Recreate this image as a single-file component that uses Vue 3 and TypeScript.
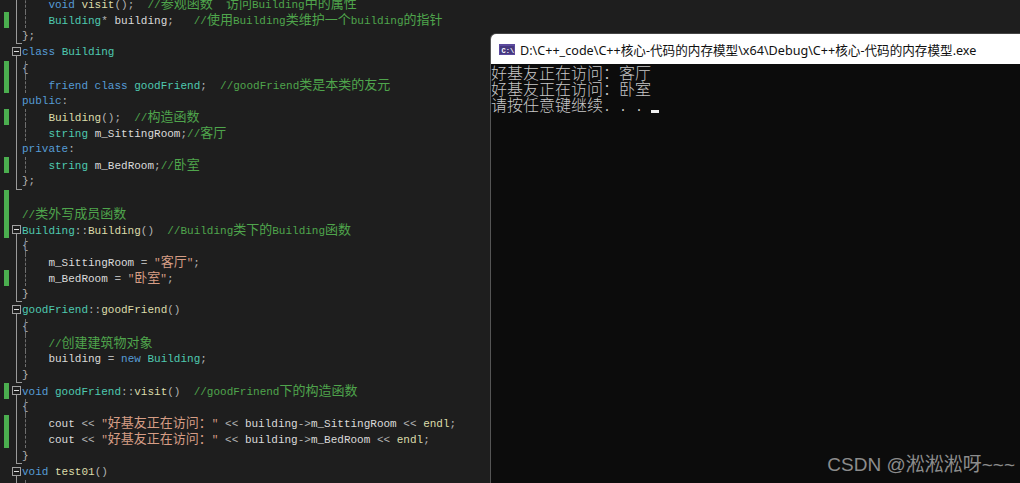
<script setup lang="ts">
type Seg = [string, string];
interface Line { segs: Seg[]; bar?: boolean; fold?: 'open' | 'mid' | 'end' | 'none'; guide?: boolean }

const lines: Line[] = [
  { segs: [['', '    '], ['k', 'void'], ['', ' '], ['f', 'visit'], ['p', '();'], ['', '  '], ['g', '//参观函数  访问Building中的属性']], fold: 'mid', guide: true },
  { segs: [['', '    '], ['c', 'Building'], ['p', '*'], ['', ' '], ['v', 'building'], ['p', ';'], ['', '   '], ['g', '//使用Building类维护一个building的指针']], bar: true, fold: 'mid', guide: true },
  { segs: [['p', '};']], fold: 'end' },
  { segs: [['k', 'class'], ['', ' '], ['c', 'Building']], fold: 'open' },
  { segs: [['p', '{']], bar: true, fold: 'mid', guide: true },
  { segs: [['', '    '], ['k', 'friend class'], ['', ' '], ['c', 'goodFriend'], ['p', ';'], ['', '  '], ['g', '//goodFriend类是本类的友元']], bar: true, fold: 'mid', guide: true },
  { segs: [['k', 'public'], ['p', ':']], fold: 'mid' },
  { segs: [['', '    '], ['f', 'Building'], ['p', '();'], ['', '  '], ['g', '//构造函数']], bar: true, fold: 'mid', guide: true },
  { segs: [['', '    '], ['c', 'string'], ['', ' '], ['v', 'm_SittingRoom'], ['p', ';'], ['g', '//客厅']], fold: 'mid', guide: true },
  { segs: [['k', 'private'], ['p', ':']], fold: 'mid' },
  { segs: [['', '    '], ['c', 'string'], ['', ' '], ['v', 'm_BedRoom'], ['p', ';'], ['g', '//卧室']], bar: true, fold: 'mid', guide: true },
  { segs: [['p', '};']], fold: 'end' },
  { segs: [], bar: true },
  { segs: [['g', '//类外写成员函数']], bar: true },
  { segs: [['c', 'Building'], ['p', '::'], ['f', 'Building'], ['p', '()'], ['', '  '], ['g', '//Building类下的Building函数']], bar: true, fold: 'open' },
  { segs: [['p', '{']], fold: 'mid', guide: true },
  { segs: [['', '    '], ['v', 'm_SittingRoom'], ['', ' '], ['p', '='], ['', ' '], ['s', '"客厅"'], ['p', ';']], fold: 'mid', guide: true },
  { segs: [['', '    '], ['v', 'm_BedRoom'], ['', ' '], ['p', '='], ['', ' '], ['s', '"卧室"'], ['p', ';']], bar: true, fold: 'mid', guide: true },
  { segs: [['p', '}']], fold: 'end' },
  { segs: [['c', 'goodFriend'], ['p', '::'], ['f', 'goodFriend'], ['p', '()']], fold: 'open' },
  { segs: [['p', '{']], fold: 'mid', guide: true },
  { segs: [['', '    '], ['g', '//创建建筑物对象']], fold: 'mid', guide: true },
  { segs: [['', '    '], ['v', 'building'], ['', ' '], ['p', '='], ['', ' '], ['k', 'new'], ['', ' '], ['c', 'Building'], ['p', ';']], fold: 'mid', guide: true },
  { segs: [['p', '}']], fold: 'end' },
  { segs: [['k', 'void'], ['', ' '], ['c', 'goodFriend'], ['p', '::'], ['f', 'visit'], ['p', '()'], ['', '  '], ['g', '//goodFrinend下的构造函数']], bar: true, fold: 'open' },
  { segs: [['p', '{']], fold: 'mid', guide: true },
  { segs: [['', '    '], ['v', 'cout'], ['', ' '], ['p', '<<'], ['', ' '], ['s', '"好基友正在访问："'], ['', ' '], ['p', '<<'], ['', ' '], ['v', 'building'], ['p', '->'], ['v', 'm_SittingRoom'], ['', ' '], ['p', '<<'], ['', ' '], ['f', 'endl'], ['p', ';']], bar: true, fold: 'mid', guide: true },
  { segs: [['', '    '], ['v', 'cout'], ['', ' '], ['p', '<<'], ['', ' '], ['s', '"好基友正在访问："'], ['', ' '], ['p', '<<'], ['', ' '], ['v', 'building'], ['p', '->'], ['v', 'm_BedRoom'], ['', ' '], ['p', '<<'], ['', ' '], ['f', 'endl'], ['p', ';']], bar: true, fold: 'mid', guide: true },
  { segs: [['p', '}']], fold: 'end' },
  { segs: [['k', 'void'], ['', ' '], ['f', 'test01'], ['p', '()']], fold: 'open' },
  { segs: [], fold: 'mid', guide: true },
];

// CJK runs are double-cell wide in the editor, so they get their own size.
function runs(text: string): { t: string; cjk: boolean }[] {
  return (text.match(/[\u3000-\u9fff\uff00-\uffef]+|[^\u3000-\u9fff\uff00-\uffef]+/g) ?? []).map((t) => ({
    t,
    cjk: /[\u3000-\u9fff\uff00-\uffef]/.test(t),
  }));
}

const output = ['好基友正在访问：客厅', '好基友正在访问：卧室'];
</script>

<template>
  <div class="screen">
    <div class="editor">
      <div v-for="(line, i) in lines" :key="i" class="line">
        <span class="bar" :class="{ on: line.bar }"></span>
        <span class="fold" :class="line.fold ?? 'none'"></span>
        <span class="code" :class="{ guide: line.guide }"><span
            v-for="(seg, j) in line.segs" :key="j" :class="seg[0]"><span
              v-for="(r, k) in runs(seg[1])" :key="k" :class="{ cjk: r.cjk }">{{ r.t }}</span></span></span>
      </div>
    </div>

    <section class="console">
      <header class="titlebar">
        <svg class="icon" width="16" height="11" viewBox="0 0 16 11">
          <rect width="16" height="11" fill="#5c4a9e" />
          <rect x="1" y="2" width="14" height="8" fill="#46397f" />
          <text x="2.5" y="8.6" class="icon-text">C:\</text>
        </svg>
        <span class="title">D:\C++_code\C++核心-代码的内存模型\x64\Debug\C++核心-代码的内存模型.exe</span>
      </header>
      <div class="output">
        <div v-for="o in output" :key="o" class="out-line">{{ o }}</div>
        <div class="out-line">请按任意键继续<span class="half">. . . </span><i class="cursor"></i></div>
      </div>
      <div class="watermark">CSDN @淞淞淞呀~~~</div>
    </section>
  </div>
</template>

<style scoped>
.screen {
  width: 1020px;
  height: 483px;
  position: relative;
  overflow: hidden;
  background: #1e1e1e;
}
.editor {
  margin-top: -4px;
  font-family: "Liberation Mono", monospace;
  font-size: 11px;
  color: #dcdcdc;
}
.line {
  display: flex;
  height: 16.13px;
  line-height: 16.13px;
}
.bar {
  width: 5px;
  margin-left: 4px;
  flex: none;
}
.bar.on {
  background: #4bae4f;
}
.fold {
  width: 13px;
  flex: none;
  position: relative;
}
.fold.mid::before,
.fold.end::before {
  content: "";
  position: absolute;
  left: 7px;
  top: 0;
  bottom: 0;
  border-left: 1px solid #9a9a9a;
}
.fold.end::before {
  bottom: 0;
  width: 5px;
  border-bottom: 1px solid #9a9a9a;
}
.fold.open::before {
  content: "";
  position: absolute;
  left: 3px;
  top: 3px;
  width: 7px;
  height: 7px;
  border: 1px solid #a0a0a0;
  background: linear-gradient(#dcdcdc, #dcdcdc) center / 5px 1px no-repeat;
}
.fold.open::after {
  content: "";
  position: absolute;
  left: 7px;
  top: 12px;
  bottom: 0;
  border-left: 1px solid #9a9a9a;
}
.code {
  white-space: pre;
  position: relative;
}
.code.guide::before {
  content: "";
  position: absolute;
  left: 3px;
  top: 0;
  bottom: 0;
  border-left: 1px dashed #6e6e6e;
}
.cjk {
  font-family: "Noto Sans CJK SC", sans-serif;
  font-size: 13px;
  line-height: 1;
}
.k { color: #569cd6; }
.c { color: #4ec9b0; }
.f { color: #dcdcaa; }
.v { color: #dadada; }
.p { color: #b4b4b4; }
.g { color: #4fa54c; }
.s { color: #d69d85; }

.console {
  position: absolute;
  left: 490px;
  top: 33px;
  right: 0;
  bottom: 0;
  background: #0c0c0c;
  border-left: 1px solid #555;
  border-top: 1px solid #444;
  border-top-left-radius: 6px;
  overflow: hidden;
}
.titlebar {
  height: 30px;
  background: #fff;
  display: flex;
  align-items: center;
  padding-left: 8px;
  gap: 5px;
}
.icon {
  flex: none;
}
.icon-text {
  font-family: "Liberation Mono", monospace;
  font-size: 7px;
  font-weight: 700;
  fill: #fff;
}
.title {
  font-family: "Noto Sans", "Noto Sans CJK SC", sans-serif;
  font-size: 12.6px;
  color: #111;
  white-space: nowrap;
}
.output {
  font-family: "Noto Sans CJK SC", sans-serif;
  font-size: 16px;
  font-weight: 300;
  line-height: 16px;
  color: #c8c8c8;
  white-space: pre;
}
.out-line {
  height: 16px;
}
.half {
  font-family: "Liberation Mono", monospace;
  font-size: 13.33px;
}
.cursor {
  display: inline-block;
  width: 8px;
  height: 3px;
  background: #f0f0f0;
  vertical-align: -2px;
}
.watermark {
  position: absolute;
  right: 5px;
  bottom: 6px;
  font-family: "Liberation Sans", "Noto Sans CJK SC", sans-serif;
  font-size: 19px;
  line-height: 24px;
  color: #8c8c8c;
  white-space: nowrap;
}
</style>
